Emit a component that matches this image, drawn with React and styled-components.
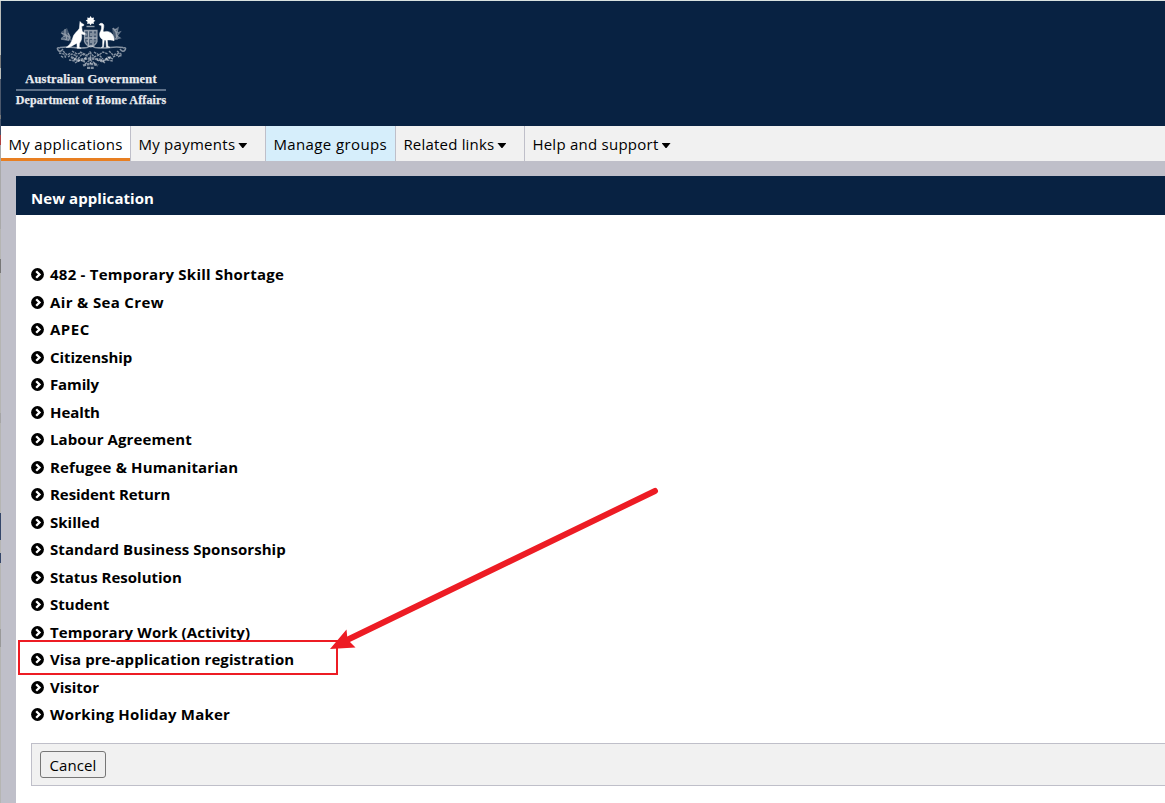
import React from "react";
import styled, { createGlobalStyle } from "styled-components";

const Global = createGlobalStyle`
  * { box-sizing: border-box; }
  body { margin: 0; background: #bfbfc9; color: #000; overflow: hidden;
    font-family: "Open Sans", "Noto Sans", sans-serif; font-size: 15px; }
`;

const Page = styled.div`
  position: relative;
  height: 803px;
  display: flex;
  flex-direction: column;
  border-top: 1px solid #d9e2df;
  overflow: hidden;
`;

const Edge = styled.div`
  position: absolute;
  left: 0;
  top: 0;
  width: 1px;
  height: 100%;
  background: linear-gradient(
    #b9bdb9 0 54px, #77797a 54px 67px, #b9bdb9 67px 78px, #4b586c 78px 114px,
    #777 114px 118px, #44546c 118px 134px, #b04040 134px 144px, #a9a9a9 144px 228px,
    #b5b5b3 228px 258px, #777 258px 272px, #b5b5b3 272px 412px, #a5a5a5 412px 422px,
    #b5b5b3 422px 460px, #b5b5b3 460px 512px, #34466a 512px 539px, #b5b5b3 539px 552px,
    #34466a 552px 562px, #b5b5b3 562px 628px, #999 628px 646px, #b5b5b3 646px);
`;

const Header = styled.header`
  height: 125px;
  padding: 14px 0 0 16px;
  background: #082242;
`;

const Brand = styled.div`
  width: 150px;
  display: flex;
  flex-direction: column;
  align-items: center;
  color: #e8ebef;
  font-family: "Liberation Serif", serif;
  font-weight: 700;
  white-space: nowrap;
`;

const BrandName = styled.div`
  height: 20px;
  line-height: ${(p) => p.$lh || 20}px;
  font-size: ${(p) => p.$size}px;
  letter-spacing: ${(p) => p.$ls}px;
  -webkit-text-stroke: 0.25px #e8ebef;
`;

const BrandRule = styled.div`
  width: 150px;
  height: 2px;
  background: #5d7088;
`;

const Nav = styled.nav`
  display: flex;
  height: 35px;
  padding-left: 1px;
  background: #f1f1f1;
`;

const NavItem = styled.a`
  width: ${(p) => p.$w}px;
  padding: 3px 0 0 7.4px;
  display: flex;
  line-height: 31px;
  white-space: nowrap;
  letter-spacing: ${(p) => p.$ls}px;
  background: ${(p) => p.$bg || "#f1f1f1"};
  border-right: ${(p) => (p.$last ? "0" : "1px solid #bfbfc9")};
  box-shadow: ${(p) => (p.$active ? "inset 0 -3px #e87f22" : "none")};
`;

const Caret = styled.span`
  width: 9px;
  height: 5px;
  margin: 14px 0 0 3px;
  background: #000;
  clip-path: polygon(0 0, 100% 0, 55% 100%, 45% 100%);
`;

const Panel = styled.main`
  flex: 1;
  margin: 15px 0 0 16px;
  background: #fff;
`;

const PanelTitle = styled.h1`
  margin: 0;
  height: 39px;
  padding: 3px 0 0 15px;
  line-height: 38px;
  font-size: 15px;
  font-weight: 700;
  letter-spacing: ${(p) => p.$ls}px;
  color: #fff;
  background: #082242;
`;

const List = styled.ul`
  list-style: none;
  margin: 0;
  padding: 45.6px 0 0 15px;
`;

const Row = styled.li`
  height: 27.5px;
  display: flex;
  align-items: center;
  gap: 6px;
  font-weight: 700;
  white-space: nowrap;
`;

const Label = styled.span`
  letter-spacing: ${(p) => p.$ls}px;
`;

const BulletIcon = styled.svg`
  width: 13px;
  height: 13px;
  margin-top: 0.6px;
`;

const Footer = styled.div`
  height: 43px;
  margin: 14.9px 0 0 15px;
  padding: 7px 8px;
  display: flex;
  align-items: flex-start;
  background: #f1f1f1;
  border: 1px solid #bfbfc9;
  border-right: 0;
`;

const Button = styled.button`
  width: 66px;
  height: 27px;
  padding: 1px 0 0;
  font: 400 15px "Open Sans", sans-serif;
  letter-spacing: ${(p) => p.$ls}px;
  color: #000;
  background: #efefef;
  border: 1px solid #767676;
  border-radius: 3px;
`;

const Markup = styled.svg`
  position: absolute;
  left: 0;
  top: -1px;
  pointer-events: none;
`;

const Crest = () => (
  <svg width="72" height="54" viewBox="0 0 72 54" fill="none" stroke="#fff">
    <path fill="#fff" stroke="none" d="M35.6 1l1.2 1.9 2.2-.4-.4 2.2 1.8 1-1.8 1.2.3 2-2.1-.3-1.2 1.6-1.3-1.7-2.1.4.3-2.1-1.8-1.2 1.9-1-.4-2.2 2.2.5z" />
    <path strokeWidth="1.4" opacity=".55" d="M31.5 11.500h8" />
    <path fill="#fff" opacity=".25" stroke="none" d="M29.500 15.500h12.500v11q-1.500 4-6.200 5.500-4.800-1.500-6.300-5.500zM6 17l6-4 5 13-7-1zM57 13l5 1 1 8-4 4z" />
    <path fill="#fff" stroke="#fff" strokeWidth=".5" d="M25 6.500l1.600 1.800 2.300 1.200c.2 1.200-.7 1.600-2.300 1.700l.6 5 3 2.200-.6 1.300-3.200-.6c.8 3.700.1 7-1.900 9.200l-.3 4.100 2 .8h-4l-.3-5-3.200 1.700c-2.600 1.500-3.800 2.700-7.500 2.500 4.200-2.500 5.700-6.600 6.700-10 .9-3.600 4.700-6 6.500-9.100z" />
    <path fill="#fff" stroke="#fff" strokeWidth=".5" d="M44 9.800c1.500-2.300 4.400-1.900 4.800.7.300 2.600-1.300 4.700-.3 6.600 2.600-1.400 6.500-.7 8.600 1.800 1.700 2.100 2.200 4.600 1.900 6.800-2.500-.9-4.500-.7-6.700-.8l.6 6.600 2 .8h-3.500l-.5-7-1.600-.3-.8 7.300-2.200.1 1.300-.8.100-6.900c-3.400-2.300-3.800-5.900-2.100-8.500 1-1.900 1.200-4.100.7-5.800z" />
    <path strokeWidth="1.300" opacity=".5" d="M29.500 15.500h12.500v11q-1.500 4-6.200 5.500-4.800-1.500-6.300-5.500zM33.500 15.500v15M38 15.500v15M29.500 23h12.500M31 18.500v2M36 18v3M40 18.500v2M31.500 26h2M36 25v3M39.500 26h1" />
    <path strokeWidth="1.300" opacity=".4" d="M6 18l5 2-4 3 5 2M10 14v5l5 4M6 24l6 1-1-5M13 18l2 4-2 4M60 15l3-2-1 5 3-1-3 4 3 2-5 1M58 13l3 4 1 8" />
    <path strokeWidth="1.500" opacity=".5" d="M5 32.500q7-1 14 0t13 0l4-2 4 2q8 1 15 0t13 0M5 33q-4-1-2 2t5-1M68 33q4-1 2 2t-5-1" />
    <path strokeWidth="1.400" opacity=".5" strokeDasharray="2.500 .8" d="M4 38l5 1 2 4M8 36l4 4 4-2M13 42l4-3 5 2-3 4M17 36l5 3 4-1M23 44l4-5 5 2 3-4 4 5 5-2 4 4M20 48l5-3 5 2M25 37l7 3-4 7M39 37l5 3 4-3 5 2M42 45l6 2 5-5 5 2M50 48l-4-3M54 36l4 4 6-2M58 42l4-2 5 1M62 36l5 4M35.500 37v12M30 49l5-4 6 4M6 41l3 2M63 42l3-2M52 45l6 1M14 45l6 1" />
    <path strokeWidth="2.400" opacity=".5" strokeDasharray="3 .7" d="M22 46q13-5 27 0M28 50.500q8-3 15 0M16 42l6 3M50 45l6-3M32 53h7" />
  </svg>
);

const Bullet = () => (
  <BulletIcon viewBox="0 0 13 13">
    <circle cx="6.500" cy="6.500" r="6.400" fill="#000" />
    <path d="M5.200 3.200L8.500 6.500 5.200 9.800" fill="none" stroke="#fff" strokeWidth="2.300" />
  </BulletIcon>
);

const navItems = [
  { text: "My applications", w: 130, ls: 0.34, bg: "#fff", active: true },
  { text: "My payments", w: 135, ls: 0.27, caret: true },
  { text: "Manage groups", w: 130, ls: 0.39, bg: "#d6eefb" },
  { text: "Related links", w: 129, ls: 0.2, caret: true },
  { text: "Help and support", w: 160, ls: 0.25, caret: true, last: true },
];

const categories = [
  ["482 - Temporary Skill Shortage", 0.24],
  ["Air & Sea Crew", 0.35],
  ["APEC", 0.5],
  ["Citizenship", -0.04],
  ["Family", -0.12],
  ["Health", -0.08],
  ["Labour Agreement", 0.1],
  ["Refugee & Humanitarian", 0.14],
  ["Resident Return", -0.06],
  ["Skilled", 0],
  ["Standard Business Sponsorship", 0.07],
  ["Status Resolution", 0],
  ["Student", 0],
  ["Temporary Work (Activity)", 0.11],
  ["Visa pre-application registration", 0.08],
  ["Visitor", 0],
  ["Working Holiday Maker", 0.2],
];

export default function App() {
  return (
    <Page>
      <Global />
      <Header>
        <Brand>
          <Crest />
          <BrandName $size={12.5} $ls={0.2}>Australian Government</BrandName>
          <BrandRule />
          <BrandName $size={12} $ls={0.14} $lh={19}>Department of Home Affairs</BrandName>
        </Brand>
      </Header>
      <Nav>
        {navItems.map((n) => (
          <NavItem key={n.text} $w={n.w} $ls={n.ls} $bg={n.bg} $active={n.active} $last={n.last}>
            {n.text}
            {n.caret && <Caret />}
          </NavItem>
        ))}
      </Nav>
      <Panel>
        <PanelTitle $ls={0.07}>New application</PanelTitle>
        <List>
          {categories.map(([text, ls]) => (
            <Row key={text}>
              <Bullet />
              <Label $ls={ls}>{text}</Label>
            </Row>
          ))}
        </List>
        <Footer>
          <Button $ls={0.1}>Cancel</Button>
        </Footer>
      </Panel>
      <Edge />
      <Markup width="700" height="803" viewBox="0 0 700 803">
        <rect x="19" y="641" width="318" height="33" fill="none" stroke="#ed1c24" strokeWidth="2" />
        <path d="M655 491L346 640.500" stroke="#ed1c24" strokeWidth="6" strokeLinecap="round" />
        <path d="M330 649L346.500 629.500L347.500 639.500L355.500 647.500z" fill="#ed1c24" />
      </Markup>
    </Page>
  );
}
